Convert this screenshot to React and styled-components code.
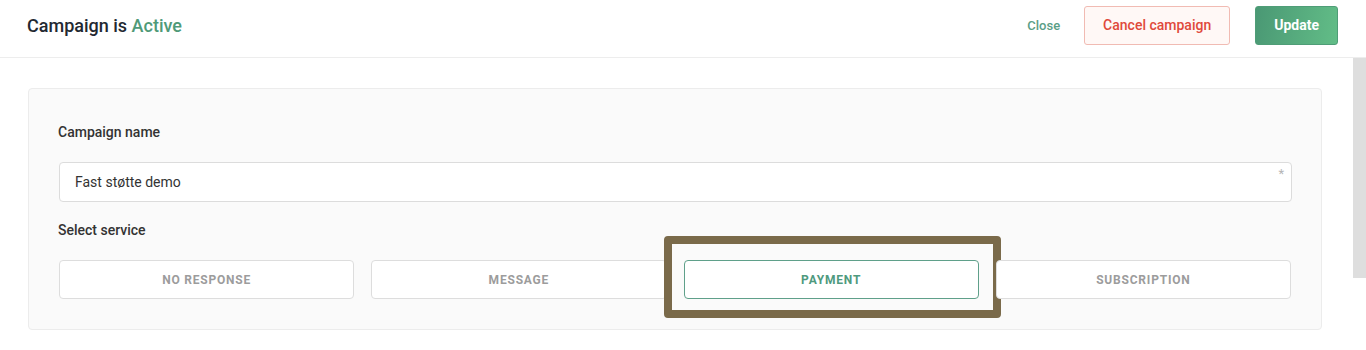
import React, { useState } from 'react'
import styled, { createGlobalStyle } from 'styled-components';

const GlobalStyle = createGlobalStyle`
  body {
    margin: 0;
    background: #ffffff;
    font-family: Roboto, "Noto Sans", Arial, sans-serif;
    color: #333;
  }
`;

const Page = styled.div`
  width: 1366px;
  height: 350px;
  overflow: hidden;
  display: flex;
  flex-direction: column;
`;

const Header = styled.header`
  box-sizing: border-box;
  height: 58px;
  border-bottom: 1px solid #ededed;
  display: flex;
  align-items: center;
  justify-content: space-between;
  padding: 0 28px 7px 27px;
  flex-shrink: 0;
`;

const Title = styled.h1`
  margin: 0;
  font-size: 18px;
  font-weight: 500;
  color: #222831;
`;

const Status = styled.span`
  color: #4f9a78;
`;

const Actions = styled.div`
  display: flex;
  align-items: center;
  gap: 25px;
`;

const LinkButton = styled.button`
  background: none;
  border: none;
  padding: 0;
  margin-right: -1px;
  font-family: inherit;
  font-size: 13px;
  font-weight: 500;
  color: #5a9e86;
  cursor: pointer;
`;

const Button = styled.button`
  height: 39px;
  padding: 0 ${(p) => p.$pad || 18}px;
  border-radius: 3px;
  font-family: inherit;
  font-size: 14px;
  cursor: pointer;
  border: 1px solid ${(p) => (p.$danger ? '#f1bbb3' : '#4f9d77')};
  color: ${(p) => (p.$danger ? '#e0493b' : '#ffffff')};
  background: ${(p) =>
    p.$danger ? '#fff8f6' : 'linear-gradient(100deg, #4a9874 0%, #62bd87 100%)'};
  font-weight: ${(p) => (p.$danger ? 500 : 700)};
`;

const Body = styled.div`
  flex: 1;
  display: flex;
`;

const Main = styled.main`
  flex: 1;
  padding: 30px 31px 0 28px;
`;

const ScrollTrack = styled.div`
  width: 13px;
  flex-shrink: 0;
`;

const ScrollThumb = styled.div`
  height: 220px;
  background: #dedede;
`;

const Card = styled.section`
  background: #fafafa;
  border: 1px solid #ececec;
  border-radius: 4px;
  padding: 33px 29px 30px 29px;
`;

const Label = styled.div`
  font-size: 14px;
  line-height: 20px;
  font-weight: 500;
  color: #333;
  margin: ${(p) => p.$top || 0}px 0 20px 0;
`;

const InputWrap = styled.div`
  position: relative;
  margin-left: 1px;
`;

const Input = styled.input`
  box-sizing: border-box;
  width: 100%;
  height: 40px;
  border: 1px solid #dcdcdc;
  border-radius: 4px;
  background: #fff;
  padding: 0 15px;
  font-family: inherit;
  font-size: 14px;
  color: #333;
  outline: none;
`;

const Required = styled.span`
  position: absolute;
  right: 8px;
  top: 4px;
  font-size: 13px;
  color: #b5b5b5;
`;

const ServiceRow = styled.div`
  display: grid;
  grid-template-columns: repeat(4, 1fr);
  gap: 17px;
  margin: 0 1px 0 1px;
`;

const ServiceSlot = styled.div`
  position: relative;
`;

const ServiceButton = styled.button`
  width: 100%;
  height: 39px;
  border-radius: 4px;
  background: #fff;
  border: 1px solid ${(p) => (p.$active ? '#5fa08a' : '#dddddd')};
  color: ${(p) => (p.$active ? '#4f9a7e' : '#9c9c9c')};
  font-family: inherit;
  font-size: 12px;
  font-weight: 700;
  letter-spacing: 0.8px;
  text-transform: uppercase;
  cursor: pointer;
`;

const Highlight = styled.div`
  position: absolute;
  left: -20px;
  right: -22px;
  top: -24px;
  bottom: -19px;
  border: 8px solid #7a6a4a;
  border-radius: 4px;
  pointer-events: none;
`;

const services = ['No response', 'Message', 'Payment', 'Subscription'];

const App = () => {
  const [selected, setSelected] = useState('Payment');
  const [name, setName] = useState('Fast støtte demo');

  return (
    <Page>
      <GlobalStyle />
      <Header>
        <Title>
          Campaign is <Status>Active</Status>
        </Title>
        <Actions>
          <LinkButton>Close</LinkButton>
          <Button $danger>Cancel campaign</Button>
          <Button>Update</Button>
        </Actions>
      </Header>
      <Body>
        <Main>
          <Card>
            <Label>Campaign name</Label>
            <InputWrap>
              <Input value={name} onChange={(e) => setName(e.target.value)} />
              <Required>*</Required>
            </InputWrap>
            <Label $top={18}>Select service</Label>
            <ServiceRow>
              {services.map((s) => (
                <ServiceSlot key={s}>
                  <ServiceButton $active={s === selected} onClick={() => setSelected(s)}>
                    {s}
                  </ServiceButton>
                  {s === 'Payment' && <Highlight />}
                </ServiceSlot>
              ))}
            </ServiceRow>
          </Card>
        </Main>
        <ScrollTrack>
          <ScrollThumb />
        </ScrollTrack>
      </Body>
    </Page>
  );
};

export default App
